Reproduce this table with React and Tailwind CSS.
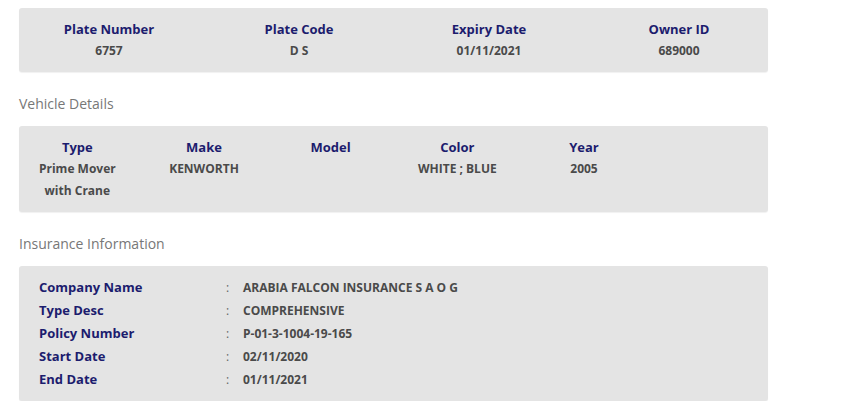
import React from 'react';

const navy = 'text-[#1c1c6e]';
const val = 'text-[#4a4a4a]';

function Card({ children, className = '' }) {
  return (
    <div className={`w-[749px] rounded-[3px] bg-[#e4e4e4] shadow-[0_1px_1px_rgba(0,0,0,0.06)] ${className}`}>
      {children}
    </div>
  );
}

function Heading({ children }) {
  return (
    <h4 className="mt-[22px] mb-[12px] text-[14px] leading-[20px] text-[#777]">{children}</h4>
  );
}

export default function App() {
  const plate = [
    ['Plate Number', '6757'],
    ['Plate Code', 'D S'],
    ['Expiry Date', '01/11/2021'],
    ['Owner ID', '689000'],
  ];
  const vehicle = [
    ['Type', 'Prime Mover with Crane'],
    ['Make', 'KENWORTH'],
    ['Model', ''],
    ['Color', 'WHITE ; BLUE'],
    ['Year', '2005'],
    ['', ''],
  ];
  const insurance = [
    ['Company Name', 'ARABIA FALCON INSURANCE S A O G'],
    ['Type Desc', 'COMPREHENSIVE'],
    ['Policy Number', 'P-01-3-1004-19-165'],
    ['Start Date', '02/11/2020'],
    ['End Date', '01/11/2021'],
  ];

  return (
    <div className="min-h-[401px] bg-white pl-[19px] pt-[8px] font-['Open_Sans',sans-serif]">
      <Card className="pt-[11px] pb-[11px]">
        <div className="ml-[-5px] grid w-[760px] grid-cols-4">
          {plate.map(([k, v]) => (
            <div key={k} className="text-center">
              <div className={`text-[13px] font-bold leading-[21px] ${navy}`}>{k}</div>
              <div className={`text-[12px] font-bold leading-[21px] ${val}`}>{v}</div>
            </div>
          ))}
        </div>
      </Card>

      <Heading>Vehicle Details</Heading>
      <Card className="pt-[10px] pb-[11px]">
        <div className="ml-[-5px] grid w-[760px] grid-cols-6">
          {vehicle.map(([k, v], i) => (
            <div key={i} className="px-[15px] text-center">
              <div className={`text-[13px] font-bold leading-[22px] ${navy}`}>{k}</div>
              <div className={`text-[12px] font-bold leading-[21.5px] ${val}`}>{v}</div>
            </div>
          ))}
        </div>
      </Card>

      <Heading>Insurance Information</Heading>
      <Card className="px-[20px] pt-[10px] pb-[10px]">
        {insurance.map(([k, v]) => (
          <div key={k} className="grid grid-cols-[187px_17px_1fr] items-center leading-[23px]">
            <div className={`text-[13px] font-bold ${navy}`}>{k}</div>
            <div className="text-[12px] text-[#666]">:</div>
            <div className={`text-[12px] font-bold ${val}`}>{v}</div>
          </div>
        ))}
      </Card>
    </div>
  );
}
